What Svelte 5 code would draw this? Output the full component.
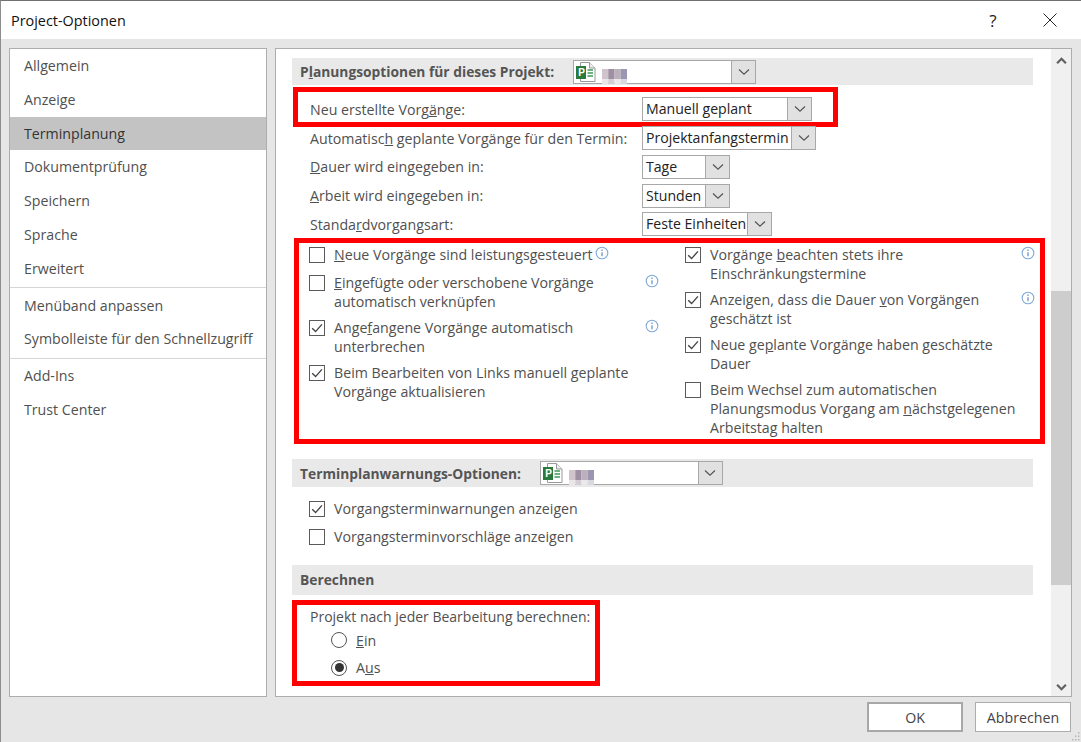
<script>
  const nav = [
    ['Allgemein', 'Anzeige', 'Terminplanung', 'Dokumentprüfung', 'Speichern', 'Sprache', 'Erweitert'],
    ['Menüband anpassen', 'Symbolleiste für den Schnellzugriff'],
    ['Add-Ins', 'Trust Center']
  ];
  const mosaicCols = [
    ['#cfc4cc', '#ebe6ea'], ['#9f8fa2', '#d5cdd6'], ['#bbb0bc', '#ece8ec'], ['#9d96b0', '#d8d8e0']
  ];
</script>

{#snippet chevron()}
  <svg class="chev" viewBox="0 0 12 8" aria-hidden="true"><path d="M1 1.5 6 6.2l5-4.7" fill="none" stroke="#555" stroke-width="1.2" /></svg>
{/snippet}

{#snippet fileIcon()}
  <svg class="file" viewBox="0 0 20 20" aria-hidden="true">
    <path d="M4.5.5h9l5.5 5.5v13.5H4.5z" fill="#fff" stroke="#9a9a9a" />
    <path d="M13.5.5v5.5H19" fill="#eee" stroke="#9a9a9a" />
    <rect x="0" y="4" width="10" height="13" fill="#2b7a3d" />
    <text x="2.2" y="14.2" class="pchar">P</text>
    <path d="M11.5 8h5.5M11.5 11h5.5M11.5 14h5.5" stroke="#3e9a58" stroke-width="1.4" />
  </svg>
  <svg class="mosaic" viewBox="0 0 25 15" aria-hidden="true">
    {#each mosaicCols as [a, b], i}
      <rect x={i * 6.25} y="0" width="6.25" height="10" fill={a} />
      <rect x={i * 6.25} y="10" width="6.25" height="5" fill={b} />
    {/each}
  </svg>
{/snippet}

{#snippet check(on)}
  <span class="cb">
    {#if on}<svg viewBox="0 0 14 14" aria-hidden="true"><path d="M2.2 7.2 5.6 10.6 11.9 3.4" fill="none" stroke="#444" stroke-width="1.4" /></svg>{/if}
  </span>
{/snippet}

{#snippet info()}
  <svg class="info" viewBox="0 0 14 14" aria-hidden="true">
    <circle cx="7" cy="7" r="5.8" fill="#fff" stroke="#7fa9d8" stroke-width="1.1" />
    <path d="M7 6.2v4" stroke="#5b8cc8" stroke-width="1.2" /><path d="M7 3.6v1.4" stroke="#5b8cc8" stroke-width="1.2" />
  </svg>
{/snippet}

<div class="win">
  <header class="title">
    <span>Project-Optionen</span>
    <div class="tbtns">
      <span class="help">?</span>
      <svg class="close" viewBox="0 0 14 14" aria-hidden="true"><path d="M.5.5l13 13M13.5.5l-13 13" stroke="#222" stroke-width="1" fill="none" /></svg>
    </div>
  </header>

  <div class="main">
    <nav class="side">
      {#each nav as group, g}
        {#if g > 0}<div class="sep"></div>{/if}
        {#each group as item}
          <div class="item" class:active={item === 'Terminplanung'}>{item}</div>
        {/each}
      {/each}
    </nav>

    <section class="panel">
      <div class="content">
        <div class="sect first">
          <b>P<u>l</u>anungsoptionen für dieses Projekt:</b>
          <div class="select s-file s1">{@render fileIcon()}<span class="arrow">{@render chevron()}</span></div>
        </div>

        <div class="redbox box1">
          <span class="lab w1">Neu erstellte Vorg<u>ä</u>nge:</span>
          <div class="select manuell"><span class="val">Manuell geplant</span><span class="arrow">{@render chevron()}</span></div>
        </div>

        <div class="rows">
          <div class="row"><span class="lab">Automatisc<u>h</u> geplante Vorgänge für den Termin:</span><div class="select projekt"><span class="val">Projektanfangstermin</span><span class="arrow">{@render chevron()}</span></div></div>
          <div class="row"><span class="lab"><u>D</u>auer wird eingegeben in:</span><div class="select tage"><span class="val">Tage</span><span class="arrow">{@render chevron()}</span></div></div>
          <div class="row"><span class="lab"><u>A</u>rbeit wird eingegeben in:</span><div class="select tage"><span class="val">Stunden</span><span class="arrow">{@render chevron()}</span></div></div>
          <div class="row"><span class="lab">Standa<u>r</u>dvorgangsart:</span><div class="select feste"><span class="val">Feste Einheiten</span><span class="arrow">{@render chevron()}</span></div></div>
        </div>

        <div class="redbox box2">
          <div class="col left">
            <div class="opt one">{@render check(false)}<span class="txt"><u>N</u>eue Vorgänge sind leistungsgesteuert</span><span class="inl">{@render info()}</span></div>
            <div class="opt">{@render check(false)}<span class="txt"><u>E</u>ingefügte oder verschobene Vorgänge<br />automatisch verknüpfen</span><span class="end">{@render info()}</span></div>
            <div class="opt">{@render check(true)}<span class="txt">Ange<u>f</u>angene Vorgänge automatisch<br />unterbrechen</span><span class="end">{@render info()}</span></div>
            <div class="opt">{@render check(true)}<span class="txt">Beim Bearbeiten von Links manuell <u>g</u>eplante<br />Vorgänge aktualisieren</span></div>
          </div>
          <div class="col right">
            <div class="opt">{@render check(true)}<span class="txt">Vorgänge <u>b</u>eachten stets ihre<br />Einschränkungstermine</span><span class="end">{@render info()}</span></div>
            <div class="opt">{@render check(true)}<span class="txt">Anzeigen, dass die Dauer <u>v</u>on Vorgängen<br />geschätzt ist</span><span class="end">{@render info()}</span></div>
            <div class="opt">{@render check(true)}<span class="txt">Neue ge<u>p</u>lante Vorgänge haben geschätzte<br />Dauer</span></div>
            <div class="opt">{@render check(false)}<span class="txt">Beim Wechsel zum automatischen<br />Planungsmodus Vorgang am <u>n</u>ächstgelegenen<br />Arbeitstag halten</span></div>
          </div>
        </div>

        <div class="sect second">
          <b>Terminplanwarnungs-Optionen:</b>
          <div class="select s-file s2">{@render fileIcon()}<span class="arrow">{@render chevron()}</span></div>
        </div>

        <div class="warns">
          <div class="opt">{@render check(true)}<span class="txt">Vorgangsterminwarnungen anzeigen</span></div>
          <div class="opt">{@render check(false)}<span class="txt">Vorgangsterminvorschläge anzeigen</span></div>
        </div>

        <div class="sect third"><b>Berechnen</b></div>

        <div class="redbox box3">
          <div class="calc">Projekt nach jeder Bearbeitung berechnen:</div>
          <div class="radio"><span class="rb"></span><span class="txt"><u>E</u>in</span></div>
          <div class="radio"><span class="rb on"></span><span class="txt">A<u>u</u>s</span></div>
        </div>
      </div>

      <div class="scroll">
        <svg class="sa" viewBox="0 0 10 7" aria-hidden="true"><path d="M1 5.5 5 1.5l4 4" fill="none" stroke="#606060" stroke-width="2" /></svg>
        <div class="thumb"></div>
        <svg class="sa bottom" viewBox="0 0 10 7" aria-hidden="true"><path d="M1 1.5l4 4 4-4" fill="none" stroke="#606060" stroke-width="2" /></svg>
      </div>
    </section>
  </div>

  <footer class="foot">
    <button class="btn def">OK</button>
    <button class="btn">Abbrechen</button>
  </footer>

  <svg class="grip" viewBox="0 0 10 10" aria-hidden="true">
    <path d="M8 1h1.5v1.5H8zM5 4.5h1.5V6H5zM8 4.5h1.5V6H8zM2 8h1.5v1.5H2zM5 8h1.5v1.5H5zM8 8h1.5v1.5H8z" fill="#b8b8b8" />
  </svg>
</div>

<style>
  :global(body) { margin: 0; background: #e6e6e6; }
  .win {
    position: relative; width: 1081px; height: 742px; box-sizing: border-box; overflow: hidden;
    background: #e6e6e6; border-top: 1px solid #707070; border-left: 1px solid #8c8c8c;
    font-family: "Open Sans", "Noto Sans", sans-serif; font-size: 14.2px; color: #505050;
  }
  .title {
    height: 38px; background: #fff; display: flex; align-items: center; justify-content: space-between;
    padding: 0 0 0 10px; color: #111; font-size: 14.4px;
  }
  .tbtns { display: flex; align-items: center; }
  .help { width: 14px; text-align: center; font-size: 17px; color: #222; margin-right: 43px; }
  .close { width: 14px; height: 14px; margin-right: 24px; }

  .main { display: flex; gap: 8px; padding: 9px 8px 0 8px; }
  .side {
    width: 258px; height: 649px; box-sizing: border-box; background: #fff; border: 1px solid #adadad;
  }
  .item { height: 33.8px; line-height: 33.8px; padding-left: 14px; color: #505050; white-space: nowrap; }
  .item.active { background: #c3c3c3; color: #333; }
  .sep { height: 1px; background: #d6d6d6; margin: 1.5px 0 0.5px; }

  .panel {
    width: 797px; height: 649px; box-sizing: border-box; background: #fff; border: 1px solid #adadad;
    display: flex; overflow: hidden;
  }
  .content { width: 775px; box-sizing: border-box; padding: 9px 0 0 16px; flex: none; }
  .sect {
    width: 741px; background: #e9e9e9; display: flex; align-items: center; padding-left: 8px; box-sizing: border-box;
    color: #555;
  }
  .sect b { font-weight: 700; font-size: 13.8px; white-space: nowrap; }
  .first { height: 27px; }
  .second { height: 28px; margin-top: 15px; }
  .third { height: 30px; margin-top: 19px; padding-bottom: 2px; }
  .s1 { margin-left: 19px; width: 183px; height: 26px; }
  .s2 { margin-left: 19px; width: 183px; height: 26px; }

  .select {
    display: flex; align-items: stretch; box-sizing: border-box; background: #fff; border: 1px solid #a8a8a8;
    height: 24px; flex: none; color: #222; font-size: 14.1px;
  }
  .val { flex: 1; padding-left: 3px; line-height: 22px; white-space: nowrap; overflow: hidden; }
  .arrow {
    width: 23px; flex: none; background: #e1e1e1; border-left: 1px solid #a8a8a8; display: flex; align-items: center; justify-content: center;
    margin-left: auto;
  }
  .chev { width: 12px; height: 8px; }
  .file { width: 20px; height: 20px; margin: 1px 0 0 2px; flex: none; }
  .pchar { font: 700 10px "Liberation Sans", sans-serif; fill: #fff; }
  .mosaic { width: 25px; height: 15px; margin: 8px 0 0 6px; flex: none; }

  .redbox { border: 5px solid #ff0000; box-sizing: border-box; }
  .box1 { margin: 2px 0 0 1px; width: 545px; height: 40px; display: flex; align-items: center; padding-left: 12px; }
  .w1 { width: 332px; flex: none; margin-top: 4px; }
  .manuell { width: 170px; margin-top: 4px; }

  .rows { margin: -1px 0 0 18px; display: flex; flex-direction: column; gap: 4.75px; }
  .row { display: flex; align-items: center; height: 24px; }
  .lab { display: block; width: 332px; flex: none; white-space: nowrap; color: #505050; }
  .projekt { width: 174px; }
  .tage { width: 88px; }
  .feste { width: 130px; }

  .box2 {
    margin: 2px 0 0 2px; width: 751px; height: 206px; display: flex; padding: 2px 0 0 10px;
  }
  .col { display: flex; flex-direction: column; gap: 7px; flex: none; }
  .left { width: 350px; margin-right: 26px; }
  .right { width: 350px; }
  .opt { display: flex; align-items: flex-start; line-height: 19px; }
  .opt.one { margin-bottom: 2px; }
  .cb {
    width: 16px; height: 16px; box-sizing: border-box; border: 1px solid #5a5a5a; background: #fff; flex: none;
    margin: 2px 9px 0 0; display: flex;
  }
  .cb svg { width: 14px; height: 14px; }
  .txt { white-space: nowrap; color: #505050; }
  .info { width: 14px; height: 14px; display: block; }
  .inl { margin-left: 2px; margin-top: 1px; }
  .end { margin-left: auto; margin-top: 1px; }

  .warns { margin: 12px 0 0 17px; display: flex; flex-direction: column; gap: 9px; }

  .box3 { margin: 5px 0 0 0; width: 308px; height: 86px; padding: 2px 0 0 13px; }
  .calc { line-height: 19px; white-space: nowrap; font-size: 14px; }
  .radio { display: flex; align-items: center; height: 27.5px; padding-left: 21px; }
  .rb {
    width: 16px; height: 16px; border-radius: 50%; border: 1.3px solid #555; background: #fff; box-sizing: border-box;
    flex: none; margin-right: 9px; display: flex; align-items: center; justify-content: center;
  }
  .rb.on::after { content: ""; width: 9px; height: 9px; border-radius: 50%; background: #333; }

  .scroll {
    width: 20px; flex: none; background: #f0f0f0; display: flex; flex-direction: column; align-items: center; position: relative;
  }
  .sa { width: 11px; height: 8px; margin-top: 8px; flex: none; }
  .sa.bottom { margin-top: auto; margin-bottom: 5px; }
  .thumb { width: 100%; height: 294px; background: #cdcdcd; margin-top: 226px; }

  .foot { display: flex; justify-content: flex-end; gap: 12px; padding: 5px 10px 0 0; }
  .btn {
    width: 96px; height: 30px; box-sizing: border-box; background: #fff; border: 1px solid #adadad; color: #444;
    font: inherit; padding: 0;
  }
  .btn.def { border: 2px solid #a8a8a8; }
  .grip { position: absolute; right: 1px; bottom: 1px; width: 10px; height: 10px; }
</style>
